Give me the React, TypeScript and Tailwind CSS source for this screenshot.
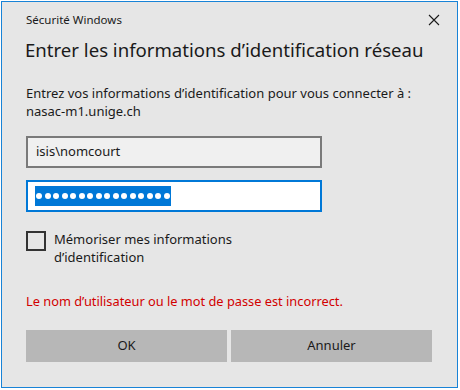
const font = { fontFamily: '"Noto Sans", "Open Sans", sans-serif' };

function CloseIcon() {
  return (
    <svg width="12" height="12" viewBox="0 0 12 12" className="text-[#1a1a1a]">
      <path d="M1 1 L11 11 M11 1 L1 11" stroke="currentColor" strokeWidth="1.1" fill="none" />
    </svg>
  );
}

export default function App() {
  return (
    <div className="h-[390px] w-[460px] bg-white pl-px pt-px" style={font}>
      <div className="flex h-[387px] w-[457px] flex-col border border-[#1883d7] bg-[#e6e6e6] text-[#1a1a1a]">
        <div className="flex h-[34px] items-center justify-between pl-[24px] pr-[17px] pt-px">
          <span className="text-[11.5px]">Sécurité Windows</span>
          <CloseIcon />
        </div>
        <h1 className="pl-[23px] text-[18.6px] leading-[28px]">Entrer les informations d’identification réseau</h1>

        <div className="mt-[20px] pl-[24px] text-[13px] leading-[18px]">
          <p>Entrez vos informations d’identification pour vous connecter à :</p>
          <p>nasac-m1.unige.ch</p>
        </div>

        <div className="mt-[16px] flex flex-col gap-[12px] pl-[24px]">
          <div className="flex h-[32px] w-[296px] items-center border-2 border-[#7a7a7a] bg-[#f0f0f0] px-[8px] text-[13px]">
            isis\nomcourt
          </div>
          <div className="flex h-[32px] w-[296px] items-center border-2 border-[#0078d7] bg-white px-[7px]">
            <span className="flex h-[20px] items-center gap-[2.5px] bg-[#0078d7] px-[1px]">
              {Array.from({ length: 16 }).map((_, i) => (
                <span key={i} className="h-[6px] w-[6px] rounded-full bg-white" />
              ))}
            </span>
          </div>
        </div>

        <label className="mt-[18px] flex items-start gap-[8px] pl-[24px]">
          <span className="mt-px h-[20px] w-[20px] shrink-0 border-2 border-[#333333]" />
          <span className="text-[13px] leading-[18px]">
            Mémoriser mes informations
            <br />
            d’identification
          </span>
        </label>

        <p className="mt-[26px] pl-[24px] text-[12.8px] leading-[18px] text-[#d20000]">
          Le nom d’utilisateur ou le mot de passe est incorrect.
        </p>

        <div className="mt-[20px] flex gap-[4px] pl-[24px]">
          <button className="h-[32px] w-[201px] bg-[#b7b7b7] text-[13px]">OK</button>
          <button className="h-[32px] w-[201px] bg-[#b7b7b7] text-[13px]">Annuler</button>
        </div>
      </div>
    </div>
  );
}
